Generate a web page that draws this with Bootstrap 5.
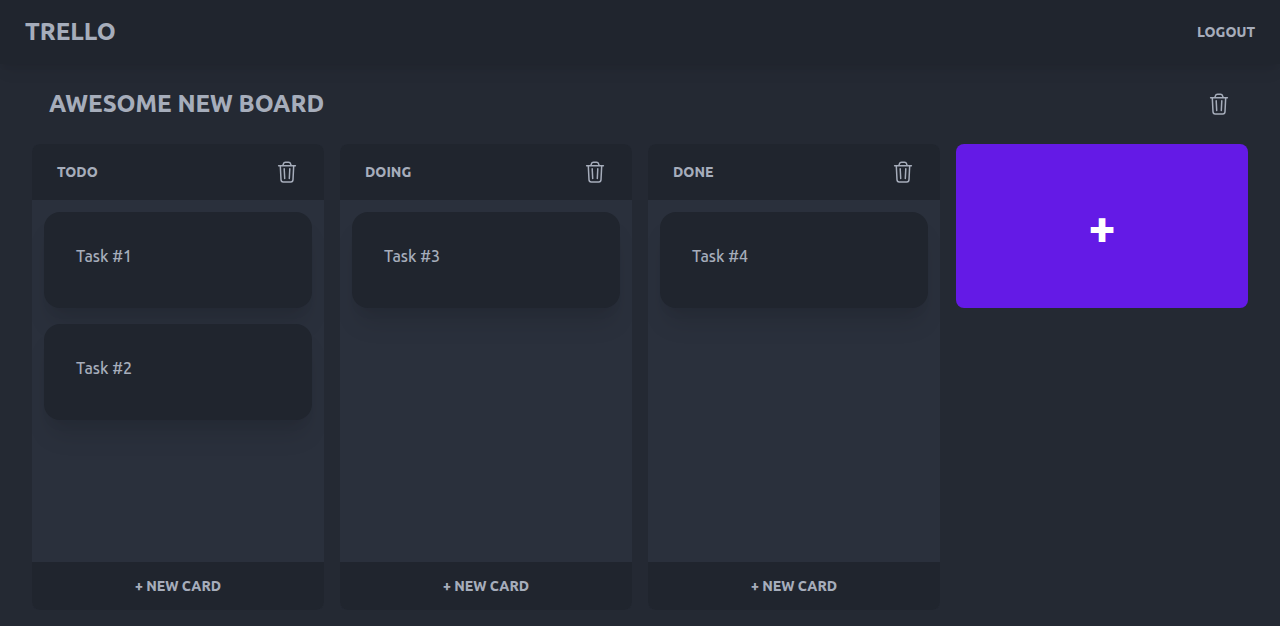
<!DOCTYPE html>
<html lang="en">
<head>
<meta charset="utf-8">
<meta name="viewport" content="width=device-width, initial-scale=1">
<title>Awesome new board</title>
<link href="https://cdn.jsdelivr.net/npm/bootstrap@5.3.0/dist/css/bootstrap.min.css" rel="stylesheet">
<style>
  :root { --base-100: #2a303c; --base-200: #242933; --base-300: #20252e; --ink: #a6adbb; --accent: #641ae6; }
  body { background: var(--base-200); color: var(--ink); font-family: Ubuntu, "Noto Sans", sans-serif; font-size: 16px; line-height: 24px; }
  .topbar { min-height: 64px; background: var(--base-300); box-shadow: 0 10px 15px -3px rgba(0,0,0,.07), 0 4px 6px -2px rgba(0,0,0,.05); padding: 8px 25px; }
  .title-text { color: var(--ink); font-size: 24px; line-height: 32px; font-weight: 800; text-transform: uppercase; text-decoration: none; }
  .label-text { color: var(--ink); font-size: 14px; line-height: 20px; font-weight: 800; text-transform: uppercase; text-decoration: none; }
  .plain-btn { background: none; border: 0; padding: 0; color: var(--ink); }
  .board-head { min-height: 80px; padding: 0 17px; }
  .lane { border-radius: 8px; overflow: hidden; background: var(--base-100); }
  .lane-head { background: var(--base-300); height: 56px; padding: 0 25px; }
  .lane-body { padding: 12px; }
  .task { background: var(--base-300); border-radius: 16px; padding: 32px; min-height: 96px; font-weight: 500; box-shadow: 0 20px 25px -5px rgba(0,0,0,.1), 0 10px 10px -5px rgba(0,0,0,.04); }
  .lane-foot { background: var(--base-300); height: 48px; }
  .add-lane { background: var(--accent); color: #fff; height: 164px; border: 0; border-radius: 8px; font-size: 48px; line-height: 48px; font-weight: 800; }
  .trash-icon { width: 24px; height: 24px; display: block; fill: none; stroke: currentColor; stroke-width: 1.5; stroke-linecap: round; stroke-linejoin: round; }
</style>
</head>
<body class="min-vh-100 d-flex flex-column">
<svg class="d-none" aria-hidden="true">
  <symbol id="trash" viewBox="0 0 24 24">
    <path d="M3.6 5.7H20.4M5.3 5.7L6 19.8Q6.1 22 8.2 22H15.8Q17.9 22 18 19.8L18.7 5.7M7.9 5.5L8.3 4.1Q8.8 2.3 10.5 2.3H13.5Q15.2 2.3 15.7 4.1L16.1 5.5M9.2 8.7L9.7 18.5M14.8 8.7L14.3 18.5"/>
  </symbol>
</svg>
<header class="topbar d-flex align-items-center justify-content-between">
  <a href="#" class="title-text">Trello</a>
  <button type="button" class="plain-btn label-text">Logout</button>
</header>
<main class="flex-grow-1 d-flex flex-column px-4 mx-2 pb-3">
  <div class="board-head d-flex align-items-center justify-content-between">
    <h1 class="title-text m-0">Awesome new board</h1>
    <button type="button" class="plain-btn" aria-label="Delete board"><svg class="trash-icon"><use href="#trash"/></svg></button>
  </div>
  <div class="row row-cols-1 row-cols-sm-2 row-cols-lg-4 gx-3 flex-grow-1">
    <div class="col d-flex">
      <section class="lane d-flex flex-column w-100">
        <div class="lane-head d-flex align-items-center justify-content-between">
          <h2 class="label-text m-0">Todo</h2>
          <button type="button" class="plain-btn" aria-label="Delete Todo"><svg class="trash-icon"><use href="#trash"/></svg></button>
        </div>
        <div class="lane-body flex-grow-1 d-flex flex-column gap-3">
          <article class="task">Task #1</article>
          <article class="task">Task #2</article>
        </div>
        <button type="button" class="plain-btn label-text lane-foot">+ New card</button>
      </section>
    </div>
    <div class="col d-flex">
      <section class="lane d-flex flex-column w-100">
        <div class="lane-head d-flex align-items-center justify-content-between">
          <h2 class="label-text m-0">Doing</h2>
          <button type="button" class="plain-btn" aria-label="Delete Doing"><svg class="trash-icon"><use href="#trash"/></svg></button>
        </div>
        <div class="lane-body flex-grow-1 d-flex flex-column gap-3">
          <article class="task">Task #3</article>
        </div>
        <button type="button" class="plain-btn label-text lane-foot">+ New card</button>
      </section>
    </div>
    <div class="col d-flex">
      <section class="lane d-flex flex-column w-100">
        <div class="lane-head d-flex align-items-center justify-content-between">
          <h2 class="label-text m-0">Done</h2>
          <button type="button" class="plain-btn" aria-label="Delete Done"><svg class="trash-icon"><use href="#trash"/></svg></button>
        </div>
        <div class="lane-body flex-grow-1 d-flex flex-column gap-3">
          <article class="task">Task #4</article>
        </div>
        <button type="button" class="plain-btn label-text lane-foot">+ New card</button>
      </section>
    </div>
    <div class="col">
      <button type="button" class="add-lane w-100" aria-label="Add list">+</button>
    </div>
  </div>
</main>
<script src="https://cdn.jsdelivr.net/npm/bootstrap@5.3.0/dist/js/bootstrap.bundle.min.js"></script>
</body>
</html>
